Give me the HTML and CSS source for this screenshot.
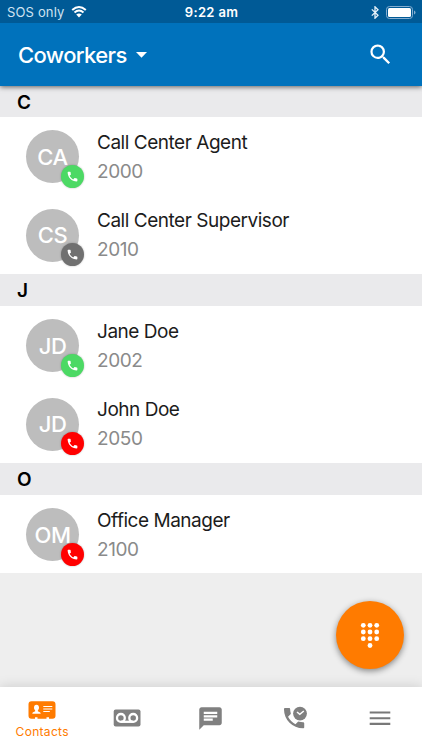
FILE: index.html
```html
<!DOCTYPE html>
<html lang="en">
<head>
<meta charset="utf-8">
<title>Coworkers</title>
<link rel="stylesheet" href="styles.css">
</head>
<body>
<svg width="0" height="0" class="defs">
  <symbol id="phone" viewBox="0 0 24 24"><path d="M6.62 10.79c1.44 2.83 3.76 5.14 6.59 6.59l2.2-2.2c.27-.27.67-.36 1.02-.24 1.12.37 2.33.57 3.57.57.55 0 1 .45 1 1V20c0 .55-.45 1-1 1-9.39 0-17-7.61-17-17 0-.55.45-1 1-1h3.5c.55 0 1 .45 1 1 0 1.25.2 2.45.57 3.57.11.35.03.74-.25 1.02l-2.2 2.2z"/></symbol>
</svg>
<div class="app">
  <div class="status">
    <div class="carrier"><span class="sos">SOS only</span>
      <svg class="wifi" width="16" height="12" viewBox="0 0 16 12"><path d="M1.2 4.1Q8-2 14.800 4.100M3.500 6.500Q8 2.500 12.500 6.500" fill="none" stroke="#fff" stroke-width="2"/><path d="M5.200 8.500Q8 6.300 10.800 8.500L8 11.400z" fill="#fff"/></svg>
    </div>
    <span class="clock">9:22 am</span>
    <div class="power">
      <svg width="8" height="13" viewBox="0 0 8 13"><path d="M.8 3.400L7 9.200 4 12.200V.8L7 3.800.8 9.600" fill="none" stroke="#e6f1f9" stroke-width="1.300"/></svg>
      <svg width="30" height="13" viewBox="0 0 30 13"><rect x=".5" y=".5" width="26" height="12" rx="3" fill="none" stroke="#84add0"/><rect x="2" y="2" width="23" height="9" rx="1.500" fill="#fff"/><path d="M28 4.500q1.500.5 1.500 2t-1.500 2z" fill="#84add0"/></svg>
    </div>
  </div>
  <header class="bar">
    <h1 class="title">Coworkers</h1>
    <svg class="caret" width="11" height="6" viewBox="0 0 11 6"><path d="M0 0h11L5.500 5.700z" fill="#fff"/></svg>
    <svg class="search" width="27" height="27" viewBox="0 0 24 24"><path fill="#fff" d="M15.500 14h-.79l-.28-.27A6.471 6.471 0 0 0 16 9.500 6.500 6.500 0 1 0 9.500 16c1.610 0 3.090-.59 4.230-1.570l.27.28v.79l5 4.990L20.490 19l-4.990-5zm-6 0C7.010 14 5 11.990 5 9.500S7.010 5 9.500 5 14 7.010 14 9.500 11.990 14 9.500 14z"/></svg>
  </header>
  <main class="list">
    <h2 class="letter first">C</h2>
    <div class="row"><div class="avatar"><span>CA</span><i class="badge green"><svg width="13" height="13"><use href="#phone"/></svg></i></div><div class="info"><div class="name">Call Center Agent</div><div class="ext">2000</div></div></div>
    <div class="row"><div class="avatar"><span>CS</span><i class="badge gray"><svg width="13" height="13"><use href="#phone"/></svg></i></div><div class="info"><div class="name">Call Center Supervisor</div><div class="ext">2010</div></div></div>
    <h2 class="letter">J</h2>
    <div class="row"><div class="avatar"><span>JD</span><i class="badge green"><svg width="13" height="13"><use href="#phone"/></svg></i></div><div class="info"><div class="name">Jane Doe</div><div class="ext">2002</div></div></div>
    <div class="row"><div class="avatar"><span>JD</span><i class="badge red"><svg width="13" height="13"><use href="#phone"/></svg></i></div><div class="info"><div class="name">John Doe</div><div class="ext">2050</div></div></div>
    <h2 class="letter">O</h2>
    <div class="row last"><div class="avatar"><span>OM</span><i class="badge red"><svg width="13" height="13"><use href="#phone"/></svg></i></div><div class="info"><div class="name">Office Manager</div><div class="ext">2100</div></div></div>
  </main>
  <nav class="tabs">
    <div class="tab active">
      <svg width="28" height="18" viewBox="0 0 28 18"><path d="M3.500.3h21a3 3 0 0 1 3 3v11.400a3 3 0 0 1-3 3H21v-1.500h-2.500v1.500h-9v-1.500H7v1.500H3.500a3 3 0 0 1-3-3V3.300a3 3 0 0 1 3-3z" fill="#ff7b00"/><path d="M8.500 3.800c1.700 0 2.500 1.200 2.500 2.700 0 1.300-.5 2.300-1.200 2.900v.8c1.500.5 2.900 1 2.900 2.600H4.300c0-1.600 1.400-2.100 2.900-2.600v-.8C6.500 8.800 6 7.800 6 6.500c0-1.500.8-2.700 2.500-2.700zM15.300 5h9v1.100h-9zM15.300 7.500h9v1.100h-9zM15.300 10h6.500v1.100h-6.500z" fill="#fff"/></svg>
      <span class="tablabel">Contacts</span>
    </div>
    <div class="tab"><svg width="28" height="18" viewBox="0 0 28 18"><rect x=".7" y=".5" width="26.800" height="17" rx="2" fill="#808080"/><g fill="none" stroke="#fff" stroke-width="2.300"><circle cx="7.900" cy="8.900" r="3.900"/><circle cx="20.200" cy="8.900" r="3.900"/><path d="M7.900 12.800h12.300"/></g></svg></div>
    <div class="tab"><svg width="27" height="27" viewBox="0 0 24 24"><path fill="#808080" d="M20 2H4c-1.100 0-1.990.9-1.990 2L2 22l4-4h14c1.100 0 2-.9 2-2V4c0-1.100-.9-2-2-2zM6 9h12v2H6V9zm8 5H6v-2h8v2zm4-6H6V6h12v2z"/></svg></div>
    <div class="tab"><svg width="24" height="24" viewBox="0 0 24 24"><svg x="-2.400" y="-1.300" width="27" height="27"><use href="#phone" fill="#808080"/></svg><circle cx="17" cy="7.600" r="7.800" fill="#fff"/><circle cx="17" cy="7.600" r="6.900" fill="#808080"/><path d="M14 6l2.800 2.300 4-3.300" fill="none" stroke="#fff" stroke-width="1.500"/></svg></div>
    <div class="tab menu"><svg width="22" height="16" viewBox="0 0 22 16"><path d="M.7 2.500h20.600M.7 8.200h20.600M.7 13.900h20.600" stroke="#787878" stroke-width="2.100"/></svg></div>
  </nav>
  <div class="fab"><svg width="20" height="27" viewBox="0 0 20 27" fill="#fff"><circle cx="3.300" cy="3.300" r="2.400"/><circle cx="10" cy="3.300" r="2.400"/><circle cx="16.700" cy="3.300" r="2.400"/><circle cx="3.300" cy="10" r="2.400"/><circle cx="10" cy="10" r="2.400"/><circle cx="16.700" cy="10" r="2.400"/><circle cx="3.300" cy="16.700" r="2.400"/><circle cx="10" cy="16.700" r="2.400"/><circle cx="16.700" cy="16.700" r="2.400"/><circle cx="10" cy="23.500" r="2.400"/></svg></div>
</div>
</body>
</html>
```
FILE: styles.css
```css
* { box-sizing: border-box; }
body { margin: 0; font-family: Inter, "Liberation Sans", sans-serif; }
svg { display: block; flex: none; }
.defs { position: absolute; }
.app { position: relative; width: 422px; height: 750px; display: flex; flex-direction: column; background: #eee; overflow: hidden; white-space: nowrap; }
.status { flex: none; height: 23px; background: #005a96; color: #fff; display: grid; grid-template-columns: 1fr auto 1fr; align-items: center; padding: 1px 6px 0 7px; position: relative; z-index: 3; }
.carrier, .power { display: flex; align-items: center; }
.carrier { gap: 7px; }
.sos { font-size: 13px; color: #cfe2f1; letter-spacing: .15px; }
.clock { font-size: 13px; font-weight: 600; letter-spacing: .35px; }
.power { justify-content: flex-end; gap: 7px; }
.bar { flex: none; height: 63px; background: #0072bc; display: flex; align-items: center; padding: 0 28px 0 18px; box-shadow: 0 1px 5px rgba(0, 0, 0, .6); position: relative; z-index: 2; }
.title { margin: 0; color: #fff; font-size: 22px; font-weight: 500; letter-spacing: -.6px; line-height: 62px; }
.caret { margin-left: 9px; }
.search { margin-left: auto; }
.list { flex: none; }
.letter { margin: 0; height: 32px; padding-left: 17px; background: #eaeaec; font-size: 19px; font-weight: 600; line-height: 34px; color: #000; }
.letter.first { height: 31px; line-height: 33px; }
.row { height: 78.500px; background: #fff; display: flex; padding: 13px 0 0 26px; gap: 18px; }
.row.last { height: 78px; }
.avatar { position: relative; width: 53px; height: 53px; border-radius: 50%; background: #bdbdbd; display: flex; align-items: center; justify-content: center; color: #fff; font-size: 22px; font-weight: 500; letter-spacing: -.4px; flex: none; }
.badge { position: absolute; left: 34.500px; top: 34.500px; width: 23px; height: 23px; border-radius: 50%; display: flex; align-items: center; justify-content: center; fill: #fff; box-shadow: 0 0 2px rgba(0, 0, 0, .3); }
.green { background: #4cd964; }
.gray { background: #707070; }
.red { background: #f00; }
.info { margin-top: -.5px; }
.name { font-size: 19px; line-height: 26px; letter-spacing: -.47px; color: #1c1c1c; }
.ext { font-size: 19px; line-height: 26px; letter-spacing: -.4px; margin-top: 3px; color: #8a8a8a; }
.tabs { margin-top: auto; flex: none; height: 63px; background: #fff; display: grid; grid-template-columns: repeat(5, 1fr); box-shadow: 0 0 12px rgba(0, 0, 0, .15); }
.tab { display: flex; flex-direction: column; align-items: center; justify-content: center; padding-bottom: 1px; }
.active { justify-content: flex-start; padding-top: 14px; }
.menu { padding-bottom: 2px; }
.tablabel { font-size: 12px; line-height: 16px; letter-spacing: .3px; margin-top: 5px; color: #ff7b00; }
.fab { position: absolute; left: 336px; top: 601px; width: 68px; height: 68px; border-radius: 50%; background: #ff7b00; display: flex; align-items: center; justify-content: center; box-shadow: 0 2px 6px rgba(0, 0, 0, .45); }
```
